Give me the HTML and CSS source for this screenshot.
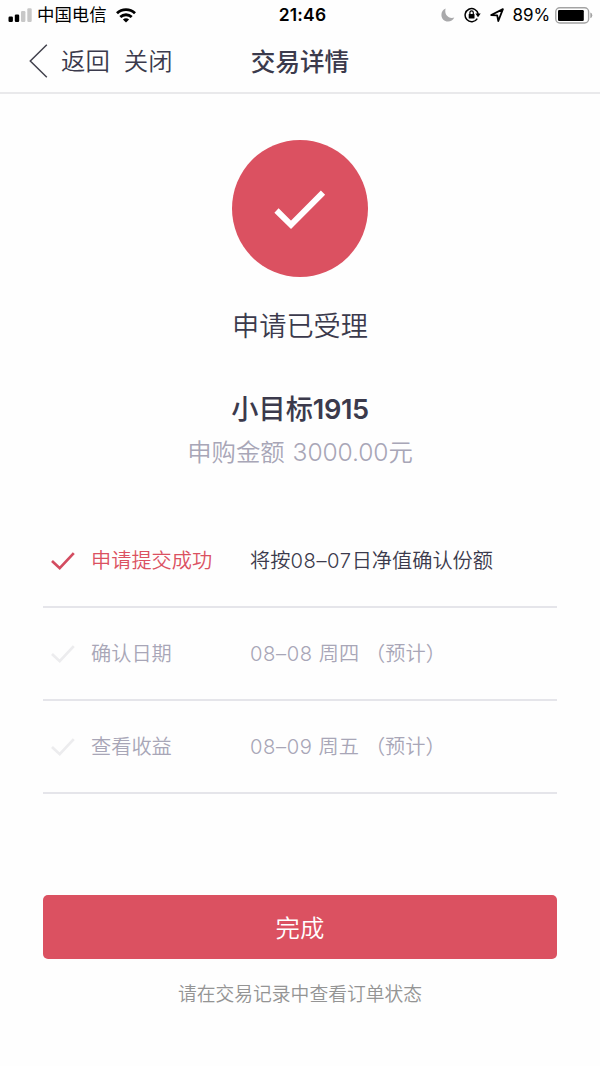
FILE: index.html
```html
<!DOCTYPE html>
<html lang="zh-CN">
<head>
<meta charset="utf-8">
<title>交易详情</title>
<link rel="stylesheet" href="styles.css">
</head>
<body>
<div class="status-bar">
  <div class="status-left">
    <svg class="signal" width="24" height="16" viewBox="0 0 24 16">
      <rect x="0.5" y="9.500" width="4.4" height="5.500" rx="1.2" fill="#000"/>
      <rect x="6.8" y="7.500" width="4.4" height="7.500" rx="1.2" fill="#000"/>
      <rect x="13" y="4" width="4.4" height="11" rx="1.2" fill="#c8c8c8"/>
      <rect x="19.3" y="1.200" width="4.4" height="13.8" rx="1.2" fill="#c8c8c8"/>
    </svg>
    <span class="carrier">中国电信</span>
    <svg class="wifi" width="20" height="15" viewBox="0 0 20 15" fill="none" stroke="#000" stroke-width="2.8">
      <path d="M1 5.2C6 .3 14 .3 19 5.2"/>
      <path d="M4.3 9C7.6 6 12.4 6 15.7 9"/>
      <path d="M10 14.6L6.9 11.5Q10 8.9 13.1 11.5Z" fill="#000" stroke="none"/>
    </svg>
  </div>
  <div class="clock">21:46</div>
  <div class="status-right">
    <svg class="moon" width="14" height="14" viewBox="0 0 14 14"><path d="M4.6.5C2 1.7.4 4 .4 6.900C.4 10.600 3.300 13.500 7 13.500C9.800 13.500 12.100 12 13.300 9.500C8 11.200 2.900 7 4.600.5Z" fill="#a9a9ab"/></svg>
    <svg class="lock" width="17" height="16" viewBox="0 0 17 16" fill="none" stroke="#000">
      <path d="M13.300 11.700A6.600 6.600 0 1 1 14.200 7" stroke-width="1.500"/>
      <path d="M11.400 6.600H16.700L14 10.200Z" fill="#000" stroke="none"/>
      <rect x="4.700" y="7" width="5.800" height="4.500" rx=".6" fill="#000" stroke="none"/>
      <path d="M5.900 7.300V5.600A1.700 1.700 0 0 1 9.300 5.600V7.300" stroke-width="1.200"/>
    </svg>
    <svg class="location" width="14" height="14" viewBox="0 0 14 14"><path d="M1.200 7L12.900 1.100L8.300 13L7.200 7.300Z" fill="none" stroke="#000" stroke-width="1.800" stroke-linejoin="round"/></svg>
    <span class="percent">89%</span>
    <svg class="battery" width="38" height="17" viewBox="0 0 38 17">
      <rect x=".8" y=".8" width="32.800" height="15.200" rx="4" fill="none" stroke="#a3a3a3" stroke-width="1.400"/>
      <rect x="3" y="3" width="25.800" height="11" rx="1.200" fill="#000"/>
      <path d="M35.300 5.600Q37.300 6.400 37.300 8.400T35.300 11.200Z" fill="#a3a3a3"/>
    </svg>
  </div>
</div>
<header class="nav">
  <div class="nav-actions">
    <svg class="chevron" width="20" height="34" viewBox="0 0 20 34"><path d="M17.800 .8L1.300 17L17.800 33.200" fill="none" stroke="#42424e" stroke-width="1.500"/></svg>
    <span class="back">返回</span>
    <span class="close">关闭</span>
  </div>
  <h1 class="nav-title">交易详情</h1>
  <div></div>
</header>
<main class="content">
  <div class="badge">
    <svg width="52" height="40" viewBox="0 0 52 40"><path d="M2.500 20.500L17 34.800L49 2.700" fill="none" stroke="#fff" stroke-width="6"/></svg>
  </div>
  <p class="result">申请已受理</p>
  <h2 class="product">小目标<span class="product-number">1915</span></h2>
  <p class="amount">申购金额 <span class="amount-number">3000.00</span>元</p>
  <ul class="steps">
    <li class="step done">
      <svg class="tick" width="24" height="20" viewBox="0 0 24 20"><path d="M1 10L8.700 17.200L22.800 2.200"/></svg>
      <span class="label">申请提交成功</span>
      <span class="detail">将按<span class="num">08–07</span>日净值确认份额</span>
    </li>
    <li class="step">
      <svg class="tick" width="24" height="20" viewBox="0 0 24 20"><path d="M1 10L8.700 17.200L22.800 2.200"/></svg>
      <span class="label">确认日期</span>
      <span class="detail"><span class="num">08–08</span><span class="weekday">周四</span>（预计）</span>
    </li>
    <li class="step">
      <svg class="tick" width="24" height="20" viewBox="0 0 24 20"><path d="M1 10L8.700 17.200L22.800 2.200"/></svg>
      <span class="label">查看收益</span>
      <span class="detail"><span class="num">08–09</span><span class="weekday">周五</span>（预计）</span>
    </li>
  </ul>
  <button class="finish">完成</button>
  <p class="hint">请在交易记录中查看订单状态</p>
</main>
</body>
</html>
```
FILE: styles.css
```css
* { box-sizing: border-box; margin: 0; padding: 0; }
body {
  width: 600px;
  height: 1066px;
  overflow: hidden;
  background: #fefefe;
  color: #3b3a4c;
  font-family: "Inter", "Noto Sans CJK SC", sans-serif;
  font-weight: 350;
}
svg { display: block; flex: none; }
.status-bar {
  display: grid;
  grid-template-columns: 1fr auto 1fr;
  align-items: center;
  height: 30px;
  padding: 0 7px 0 8px;
  color: #000;
}
.status-left, .status-right { display: flex; align-items: center; }
.status-right { justify-content: flex-end; }
.carrier { margin-left: 5px; font-size: 17.4px; line-height: 30px; font-weight: 400; }
.wifi { margin-left: 9px; }
.clock { font-size: 17.4px; font-weight: 600; line-height: 30px; letter-spacing: 0.2px; padding-left: 4px; }
.lock { margin-left: 9px; }
.location { margin-left: 9px; }
.percent { margin: 0 5px 0 9px; font-size: 17px; font-weight: 400; letter-spacing: -0.1px; line-height: 30px; }
.nav {
  display: grid;
  grid-template-columns: 1fr auto 1fr;
  align-items: center;
  height: 64px;
  border-bottom: 2px solid #e9e9eb;
  font-size: 24.4px;
  line-height: 36px;
}
.nav-actions { display: flex; align-items: center; padding-left: 29px; }
.back { margin-left: 12px; }
.close { margin-left: 14px; }
.nav-title { padding-top: 1px; font-size: 24.6px; font-weight: 500; }
.content { display: flex; flex-direction: column; align-items: center; padding: 46px 43px 0; }
.badge {
  display: flex;
  align-items: center;
  justify-content: center;
  width: 136px;
  height: 137px;
  padding-top: 3px;
  border-radius: 50%;
  background: #db5161;
}
.result { margin-top: 30px; font-size: 27.2px; line-height: 40px; }
.product { margin-top: 43px; font-size: 27.2px; line-height: 40px; font-weight: 500; }
.product-number { font-weight: 600; letter-spacing: -0.4px; }
.amount { margin-top: 3px; font-size: 24.4px; line-height: 38px; color: #a8a6b7; }
.amount-number { margin-left: 1px; font-size: 24.6px; letter-spacing: -0.1px; font-weight: 300; }
.steps { width: 514px; margin-top: 44px; list-style: none; }
.step {
  display: grid;
  grid-template-columns: 40px 159px 1fr;
  align-items: center;
  height: 93px;
  padding-left: 8px;
  border-bottom: 2px solid #e5e5ea;
  font-size: 20.2px;
  line-height: 30px;
  color: #a8a6b7;
}
.tick path { fill: none; stroke: #ececee; stroke-width: 2.700; }
.done .tick path { stroke: #d34c60; }
.done .label { color: #db5161; }
.done .detail { color: #3b3a4c; }
.num { letter-spacing: 0.6px; font-weight: 300; }
.weekday { margin: 0 6px; }
.finish {
  width: 514px;
  height: 64px;
  margin-top: 101px;
  padding-bottom: 2px;
  border: 0;
  border-radius: 5px;
  background: #db5161;
  color: #fff;
  font: inherit;
  font-size: 24.4px;
}
.hint { margin-top: 21px; font-size: 18.8px; line-height: 30px; color: #949494; }
```
